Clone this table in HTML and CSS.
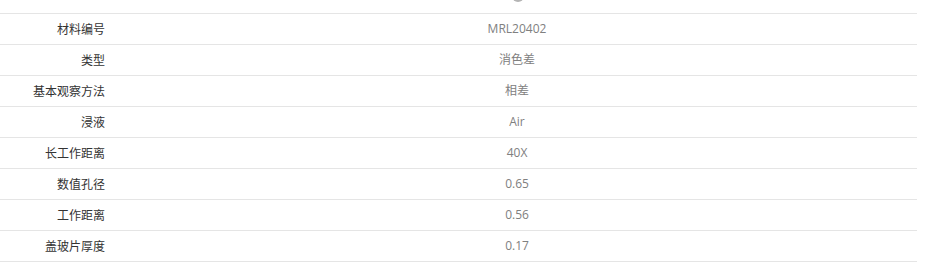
FILE: index.html
```html
<!DOCTYPE html>
<html lang="zh-CN">
<head>
<meta charset="utf-8">
<title>参数</title>
<link rel="stylesheet" href="styles.css">
</head>
<body>
<div class="top">
  <div class="top-spacer"></div>
  <div class="top-center"><span class="knob"></span></div>
</div>
<table class="spec">
  <tbody>
    <tr><th>材料编号</th><td>MRL20402</td></tr>
    <tr><th>类型</th><td>消色差</td></tr>
    <tr><th>基本观察方法</th><td>相差</td></tr>
    <tr><th>浸液</th><td>Air</td></tr>
    <tr><th>长工作距离</th><td>40X</td></tr>
    <tr><th>数值孔径</th><td>0.65</td></tr>
    <tr><th>工作距离</th><td>0.56</td></tr>
    <tr><th>盖玻片厚度</th><td>0.17</td></tr>
  </tbody>
</table>
</body>
</html>
```

FILE: styles.css
```css
html, body {
  margin: 0;
  padding: 0;
  background: #ffffff;
}

body {
  font-family: "Open Sans", "Noto Sans CJK SC", sans-serif;
  font-size: 12px;
}

.top {
  display: flex;
  width: 917px;
  height: 13px;
  overflow: hidden;
}

.top-spacer {
  width: 117px;
  flex: none;
}

.top-center {
  flex: 1;
  display: flex;
  justify-content: center;
}

.knob {
  display: block;
  width: 12px;
  height: 12px;
  margin-top: -10px;
  margin-left: 1px;
  border-radius: 50%;
  background: #b4b4b4;
}

.spec {
  width: 917px;
  border-collapse: collapse;
  border-top: 1px solid #e5e5e5;
}

.spec tr {
  border-bottom: 1px solid #e5e5e5;
}

.spec th,
.spec td {
  height: 30px;
  padding: 0;
  vertical-align: middle;
  line-height: 16px;
}

.spec th {
  width: 105px;
  padding-right: 12px;
  text-align: right;
  font-weight: normal;
  color: #333333;
  font-family: "Noto Sans CJK SC", "Open Sans", sans-serif;
}

.spec td {
  text-align: center;
  color: #808080;
}
```
